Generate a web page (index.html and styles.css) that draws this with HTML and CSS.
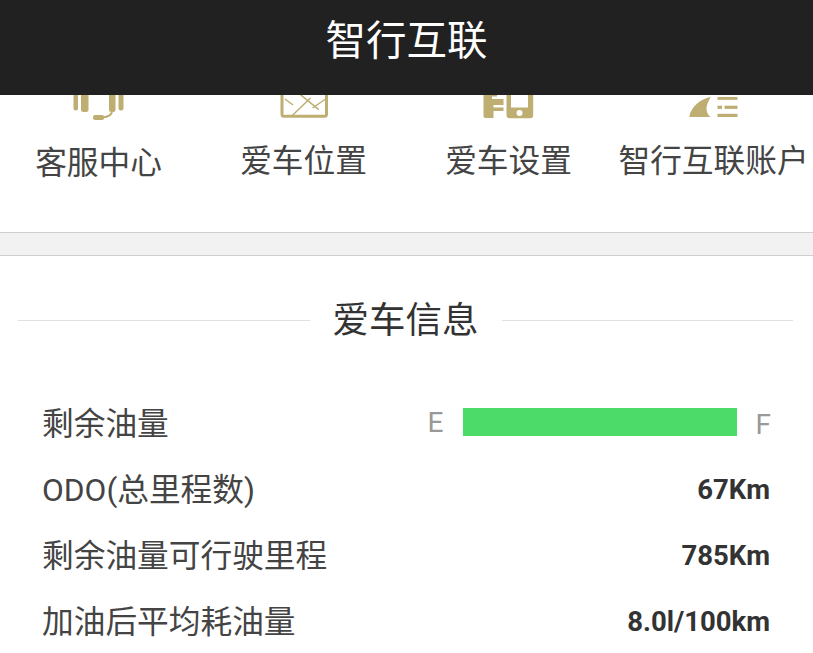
FILE: index.html
```html
<!DOCTYPE html>
<html lang="zh-CN">
<head>
    <meta charset="UTF-8">
    <meta name="viewport" content="width=device-width, initial-scale=1.0">
    <title>智行互联</title>
    <link rel="stylesheet" href="styles.css">
</head>
<body>
<header class="cabecera">
    <h1>智行互联</h1>
</header>

<div class="menu">
    <div class="menu-item">
        <div class="icono">
            <svg width="60" height="30" viewBox="0 0 60 30">
                <rect x="5.5" y="-4" width="4.5" height="19.5" rx="2.2"/>
                <rect x="13" y="-8" width="7.5" height="25" rx="2.5"/>
                <rect x="41" y="-8" width="6.5" height="25" rx="2.5"/>
                <rect x="50.5" y="-4" width="5" height="19.5" rx="2.2"/>
                <path d="M44 16c0 4-4 6-10 6.5" fill="none" stroke="#bfae72" stroke-width="2"/>
                <rect x="25" y="20" width="11" height="5" rx="2"/>
            </svg>
        </div>
        <p class="baja">客服中心</p>
    </div>
    <div class="menu-item">
        <div class="icono">
            <svg width="60" height="30" viewBox="0 0 60 30">
                <rect x="9" y="-10" width="44.5" height="31.2" rx="2" fill="none" stroke="#bfae72" stroke-width="3"/>
                <path d="M19 20.7L37.5 3M27.5-.3l18.3 15M39.5 13L54 3M12 4l8 6" fill="none" stroke="#bfae72" stroke-width="1.5"/>
            </svg>
        </div>
        <p>爱车位置</p>
    </div>
    <div class="menu-item">
        <div class="icono">
            <svg width="60" height="30" viewBox="0 0 60 30">
                <path d="M5.5-4H19V2H25.5V10H15.5V12.5H25.5V16H15.5V23H7.5a2 2 0 0 1-2-2z"/>
                <rect x="14" y="1.5" width="12" height="2.5" fill="#fff"/>
                <path d="M31.5-4h20.7a3 3 0 0 1 3 3v21.3a3 3 0 0 1-3 3H31.5a3 3 0 0 1-3-3V-1a3 3 0 0 1 3-3z"/>
                <rect x="33" y="-4" width="17" height="16.5" fill="#fff"/>
                <circle cx="41.5" cy="18" r="3" fill="#fff"/>
            </svg>
        </div>
        <p>爱车设置</p>
    </div>
    <div class="menu-item">
        <div class="icono">
            <svg width="60" height="30" viewBox="0 0 60 30">
                <path d="M6.2 22C8 12 17 4 27.8 2 24 8 23.5 12 23.5 14c0 2 1 6 4.3 8z"/>
                <rect x="34.5" y="2" width="20" height="2.8"/>
                <rect x="34.5" y="10.7" width="4.5" height="3.2"/>
                <rect x="41.5" y="10.7" width="13" height="3.2"/>
                <rect x="34.5" y="18.8" width="20" height="3.2"/>
            </svg>
        </div>
        <p>智行互联账户</p>
    </div>
</div>

<div class="banda"></div>

<section class="info">
    <div class="titulo">
        <span class="linea"></span>
        <h2>爱车信息</h2>
        <span class="linea"></span>
    </div>

    <div class="fila">
        <span>剩余油量</span>
        <div class="combustible">
            <span class="letra">E</span>
            <div class="barra"></div>
            <span class="letra baja-f">F</span>
        </div>
    </div>
    <div class="fila">
        <span>ODO(总里程数)</span>
        <strong>67Km</strong>
    </div>
    <div class="fila">
        <span>剩余油量可行驶里程</span>
        <strong>785Km</strong>
    </div>
    <div class="fila">
        <span>加油后平均耗油量</span>
        <strong>8.0l/100km</strong>
    </div>
</section>
</body>
</html>
```

FILE: styles.css
```css
body { margin: 0; padding: 0; height: 653px; overflow: hidden; background: white; color: #333; font-family: "Roboto", "Noto Sans CJK SC", sans-serif; }
.cabecera { background: #212121; height: 95px; display: flex; align-items: center; justify-content: center; }
.cabecera h1 { margin: 0 0 13px; font-size: 40.5px; font-weight: 400; color: white; line-height: 1.2; }

.menu { display: grid; grid-template-columns: repeat(4, 205px); margin-left: -4px; height: 137px; }
.menu-item { text-align: center; }
.icono { height: 30px; overflow: hidden; margin-left: -1px; }
.icono svg { display: block; margin: 0 auto; fill: #bfae72; }
.menu-item p { margin: 16px 0 0; font-size: 31.7px; line-height: 42px; color: #444; white-space: nowrap; }
.menu-item p.baja { margin-top: 18px; }

.banda { height: 22px; background: #f2f2f2; border-top: 1px solid #cfcfcf; border-bottom: 1px solid #cfcfcf; }

.info { padding: 33px 20px 0; }
.titulo { display: flex; align-items: center; justify-content: center; gap: 23px; height: 63px; margin: 0 0 37px -2px; }
.titulo h2 { margin: 0; font-size: 36.5px; font-weight: 400; color: #333; line-height: 48px; }
.linea { flex: 1; height: 1px; background: #e0e0e0; }

.fila { display: flex; justify-content: space-between; align-items: center; height: 66px; padding: 0 22px; font-size: 31.7px; color: #444; }
.fila > span { margin-bottom: 2px; }
.fila strong { font-size: 27.5px; font-weight: 700; color: #333; margin: 3px 1px 0 0; }
.combustible { display: flex; align-items: center; gap: 19px; }
.barra { width: 274px; height: 28px; background: #4cdb68; }
.letra { font-size: 28px; color: #999; }
.baja-f { margin-top: 4px; }
```
